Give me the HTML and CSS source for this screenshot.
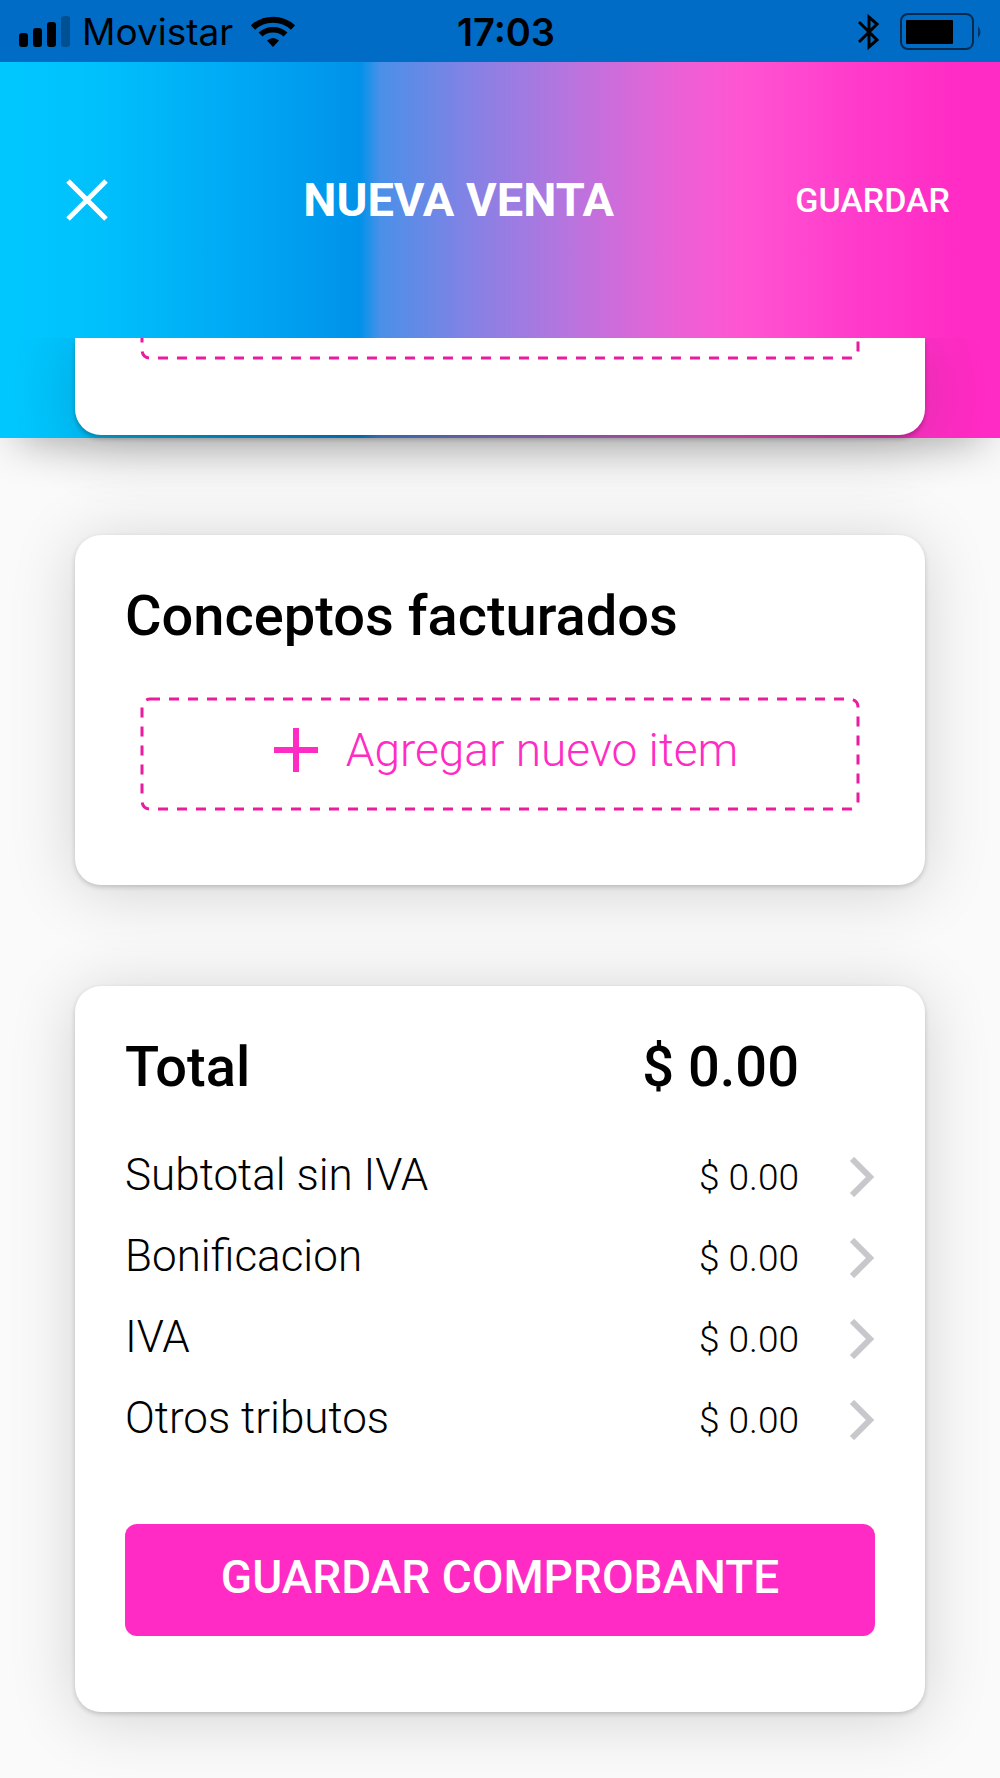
FILE: index.html
```html
<!DOCTYPE html>
<html lang="es">
<head>
<meta charset="utf-8">
<meta name="viewport" content="width=device-width, initial-scale=1">
<title>Nueva venta</title>
<link rel="stylesheet" href="styles.css">
</head>
<body>
<div class="status-bar">
  <div class="status-left">
    <svg class="signal" width="52" height="32" viewBox="0 0 52 32" aria-hidden="true">
      <rect x="1" y="17" width="9" height="14" rx="3"/>
      <rect x="15" y="12" width="9" height="19" rx="3"/>
      <rect x="29" y="6" width="9" height="25" rx="3"/>
      <rect x="43" y="0" width="9" height="31" rx="3" opacity=".25"/>
    </svg>
    <span class="carrier">Movistar</span>
    <svg width="44" height="32" viewBox="0 0 44 32" fill="none" stroke="#000" aria-hidden="true">
      <path d="M2 11.500C13 1 31 1 42 11.500" stroke-width="6"/>
      <path d="M9.500 18.500C16 12 28 12 34.500 18.500" stroke-width="5.500"/>
      <path d="M16 24.500Q22 19.500 28 24.500L22 31Z" fill="#000" stroke="none"/>
    </svg>
  </div>
  <span class="clock">17:03</span>
  <div class="status-right">
    <svg width="22" height="38" viewBox="0 0 22 38" fill="none" stroke="#000" stroke-width="3" aria-hidden="true">
      <path d="M1 9L19 27L11 34V4L19 11L1 29"/>
    </svg>
    <svg width="82" height="38" viewBox="0 0 82 38" aria-hidden="true">
      <rect x="1" y="1" width="72" height="35" rx="7" fill="none" stroke="#000" stroke-opacity=".6" stroke-width="2"/>
      <rect x="6" y="7" width="47" height="24" rx="1"/>
      <path d="M78 13Q83 19 78 25Z" opacity=".5"/>
    </svg>
  </div>
</div>

<header class="app-bar">
  <button class="close" type="button" aria-label="Cerrar">
    <svg width="42" height="42" viewBox="0 0 42 42" stroke="#fff" stroke-width="5" aria-hidden="true">
      <path d="M2 2L40 40M40 2L2 40"/>
    </svg>
  </button>
  <h1 class="title">NUEVA VENTA</h1>
  <button class="save-link" type="button">GUARDAR</button>
</header>

<main>
  <div class="hero">
    <section class="card card-scrolled">
      <div class="scrolled-slot">
        <svg class="dashes dashes-scrolled" aria-hidden="true"><rect class="dash-line" x="0" y="0" width="100%" height="100%" rx="8"/></svg>
      </div>
    </section>
  </div>

  <div class="content">
    <section class="card">
      <h2 class="card-title">Conceptos facturados</h2>
      <button class="add-item" type="button">
        <svg class="dashes" aria-hidden="true"><rect class="dash-line" x="0" y="0" width="100%" height="100%" rx="8"/></svg>
        <svg width="44" height="44" viewBox="0 0 44 44" stroke="#ff2bc4" stroke-width="6" aria-hidden="true"><path d="M0 22H44M22 0V44"/></svg>
        <span>Agregar nuevo item</span>
      </button>
    </section>

    <section class="card">
      <div class="total">
        <h2 class="card-title">Total</h2>
        <span class="card-title">$ 0.00</span>
      </div>
      <ul class="rows">
        <li><button class="row" type="button"><span class="label">Subtotal sin IVA</span><span class="amount">$ 0.00</span><svg class="chevron" viewBox="0 0 26 40" aria-hidden="true"><path d="M3 2L21 20L3 38"/></svg></button></li>
        <li><button class="row" type="button"><span class="label">Bonificacion</span><span class="amount">$ 0.00</span><svg class="chevron" viewBox="0 0 26 40" aria-hidden="true"><path d="M3 2L21 20L3 38"/></svg></button></li>
        <li><button class="row" type="button"><span class="label">IVA</span><span class="amount">$ 0.00</span><svg class="chevron" viewBox="0 0 26 40" aria-hidden="true"><path d="M3 2L21 20L3 38"/></svg></button></li>
        <li><button class="row" type="button"><span class="label">Otros tributos</span><span class="amount">$ 0.00</span><svg class="chevron" viewBox="0 0 26 40" aria-hidden="true"><path d="M3 2L21 20L3 38"/></svg></button></li>
      </ul>
      <button class="submit" type="button">GUARDAR COMPROBANTE</button>
    </section>
  </div>
</main>
</body>
</html>
```
FILE: styles.css
```css
* {
  box-sizing: border-box;
}

:root {
  --pink: #ff2bc4;
  --brand: linear-gradient(90deg, #00c8ff 0%, #00c0fc 10%, #00a8f4 24%, #0092ea 36%, #4a90e8 38%, #8a80e4 48%, #b874de 57%, #e862d6 67%, #ff55d2 74%, #ff3acb 86%, #ff2bc4 96%);
}

body {
  margin: 0;
  background: #fafafa;
  color: #000;
  font-family: Roboto, "Liberation Sans", sans-serif;
}

button {
  border: 0;
  padding: 0;
  background: none;
  color: inherit;
  font: inherit;
  cursor: pointer;
}

svg {
  display: block;
  flex: none;
}

.status-bar {
  display: grid;
  grid-template-columns: 1fr auto 1fr;
  align-items: center;
  height: 62px;
  padding: 2px 18px 0;
  background: #006cc6;
  font-family: Inter, "Liberation Sans", sans-serif;
  font-size: 37px;
  line-height: 40px;
}

.status-left,
.status-right {
  display: flex;
  align-items: center;
}

.status-left {
  gap: 12px;
}

.carrier {
  margin-right: 6px;
}

.status-right {
  justify-content: flex-end;
  gap: 20px;
}

.clock {
  padding-left: 12px;
  font-size: 38px;
  font-weight: 600;
}

.app-bar {
  position: relative;
  z-index: 2;
  display: flex;
  align-items: center;
  justify-content: space-between;
  height: 276px;
  padding: 0 50px 0 66px;
  background: var(--brand);
  color: #fff;
}

.close {
  width: 56px;
}

.title {
  margin: 0;
  font-size: 47px;
  font-weight: 700;
  line-height: 56px;
}

.save-link {
  font-size: 34px;
  font-weight: 500;
  line-height: 40px;
}

.hero {
  height: 100px;
  padding: 0 75px;
  background: var(--brand);
  box-shadow: 0 20px 44px -16px rgba(0, 0, 0, .3);
}

.card {
  padding: 50px;
  border-radius: 26px;
  background: #fff;
  box-shadow: 0 2px 5px rgba(0, 0, 0, .18), 0 6px 66px rgba(0, 0, 0, .16);
}

.card-scrolled {
  height: 97px;
  padding: 0 67px;
  border-radius: 0 0 26px 26px;
  box-shadow: 0 4px 4px rgba(0, 0, 0, .22), 0 10px 66px rgba(0, 0, 0, .16);
}

.scrolled-slot {
  display: flex;
  align-items: flex-end;
  height: 22px;
  overflow-x: visible;
  overflow-y: clip;
  padding-bottom: 2px;
}

.dashes {
  overflow: visible;
}

.dashes-scrolled {
  width: 100%;
  height: 110px;
}

.dash-line {
  fill: none;
  stroke: #ec1a9f;
  stroke-width: 3;
  stroke-dasharray: 10 9;
}

.content {
  display: flex;
  flex-direction: column;
  gap: 101px;
  padding: 97px 75px 66px;
}

.card-title {
  margin: 0;
  font-size: 56px;
  font-weight: 500;
  line-height: 62px;
}

.add-item {
  position: relative;
  display: flex;
  align-items: center;
  justify-content: center;
  gap: 28px;
  width: calc(100% - 34px);
  height: 110px;
  margin: 52px 17px 26px;
  padding: 0 0 8px 12px;
  color: var(--pink);
  font-size: 46px;
  font-weight: 300;
  line-height: 52px;
}

.add-item .dashes {
  position: absolute;
  inset: 0;
  width: 100%;
  height: 100%;
}

.total {
  display: flex;
  justify-content: space-between;
  padding-right: 76px;
}

.rows {
  margin: 38px 0 0;
  padding: 0;
  list-style: none;
}

.row {
  display: grid;
  grid-template-columns: 1fr auto 52px;
  align-items: baseline;
  column-gap: 24px;
  width: 100%;
  padding: 13px 0;
  text-align: left;
  font-weight: 300;
  line-height: 52px;
}

.label {
  font-size: 44px;
}

.amount {
  font-size: 37px;
}

.chevron {
  align-self: center;
  justify-self: end;
  width: 26px;
  height: 40px;
  fill: none;
  stroke: #c7c7cc;
  stroke-width: 6;
}

.submit {
  width: 100%;
  height: 112px;
  margin: 64px 0 26px;
  padding-bottom: 6px;
  border-radius: 12px;
  background: var(--pink);
  color: #fff;
  font-size: 46px;
  font-weight: 500;
}
```
